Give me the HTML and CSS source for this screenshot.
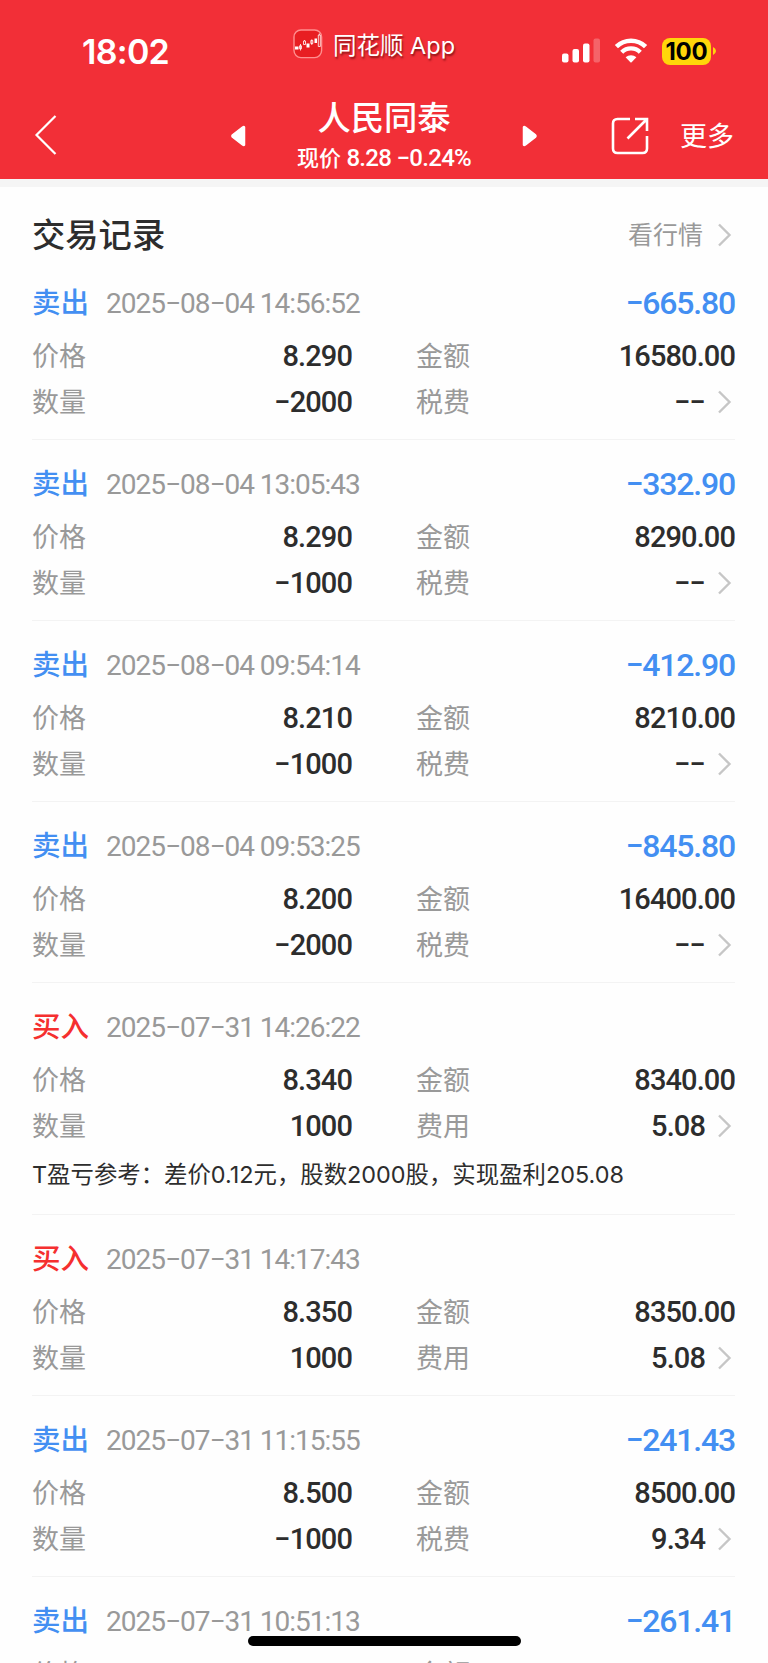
FILE: index.html
```html
<!DOCTYPE html>
<html lang="zh-CN">
<head>
  <meta charset="UTF-8" />
  <meta name="viewport" content="width=device-width, initial-scale=1.0"/>
  <title>人民同泰 交易记录</title>
  <link rel="stylesheet" href="styles.css">
</head>
<body>
  <!-- shared icons -->
  <svg class="sprite" width="0" height="0">
    <symbol id="arrow" viewBox="0 0 15 26">
      <path d="M2 2.5 L12.5 13 L2 23.5" fill="none" stroke="#c6c6c6" stroke-width="2.4"/>
    </symbol>
  </svg>

  <div class="page">
    <header class="header">
      <div class="status">
        <div class="time">18:02</div>
        <div class="app">
          <svg class="app-logo" width="30" height="30" viewBox="0 0 30 30">
            <rect x="1" y="1" width="27.6" height="27.6" rx="7" fill="#e81e22" stroke="#ff8f8f" stroke-width="1.4"/>
            <path d="M2 17.5h3.5v3H2z M13.5 14.5h3v4h-3z M21.5 9.5h2.5v4.5h-2.5z" fill="#fff"/>
            <path d="M6.5 16.8h2v3h-2z M7.5 15v6.5 M10.5 12h2v3.5h-2z M11.5 11v1 M17.8 11.5h2v3h-2z M18.8 10.3v5.7 M25.3 6h2v11.5h-2z M26.3 4.5v1.5" fill="none" stroke="#fff" stroke-width=".8"/>
          </svg>
          <span>同花顺 App</span>
        </div>
        <div class="status-icons">
          <svg width="39" height="26" viewBox="0 0 39 26">
            <rect x="0" y="15.5" width="6.5" height="9" rx="2" fill="#fff"/>
            <rect x="10.5" y="11" width="6.5" height="13.5" rx="2" fill="#fff"/>
            <rect x="21" y="5.5" width="6.5" height="19" rx="2" fill="#fff"/>
            <rect x="31.5" y="0.5" width="6.5" height="24" rx="2" fill="#fff" fill-opacity=".25"/>
          </svg>
          <svg class="wifi" width="34" height="26" viewBox="0 0 34 26">
            <path d="M2.4 8.6 A21 21 0 0 1 31.6 8.6" fill="none" stroke="#fff" stroke-width="4.6"/>
            <path d="M7.7 14.2 A13.3 13.3 0 0 1 26.3 14.2" fill="none" stroke="#fff" stroke-width="4.4"/>
            <path d="M11.6 19.3 A8 8 0 0 1 22.4 19.3 L17.6 24.2 Q17 24.7 16.4 24.2 Z" fill="#fff"/>
          </svg>
          <div class="battery">100</div>
          <svg class="battery-tip" width="3" height="8" viewBox="0 0 3 8">
            <path d="M0 0 Q3 1.5 3 4 Q3 6.5 0 8 Z" fill="#ffd60a"/>
          </svg>
        </div>
      </div>

      <nav class="nav">
        <svg class="back" width="24" height="42" viewBox="0 0 24 42">
          <path d="M22.5 2 L3.5 21 L22.5 40" fill="none" stroke="#fff" stroke-width="2.2"/>
        </svg>
        <div class="stock">
          <svg width="16" height="24" viewBox="0 0 16 24">
            <path d="M14.5 3 V21 Q14 22 12.5 21 L2.5 13.2 Q1.3 12 2.5 10.8 L12.5 3 Q14 2 14.5 3 Z" fill="#fff" stroke="#fff" stroke-width="1.5" stroke-linejoin="round"/>
          </svg>
          <div class="stock-info">
            <h1>人民同泰</h1>
            <p>现价 <span>8.28 −0.24%</span></p>
          </div>
          <svg width="16" height="24" viewBox="0 0 16 24">
            <path d="M1.5 3 V21 Q2 22 3.5 21 L13.5 13.2 Q14.7 12 13.5 10.8 L3.5 3 Q2 2 1.5 3 Z" fill="#fff" stroke="#fff" stroke-width="1.5" stroke-linejoin="round"/>
          </svg>
        </div>
        <div class="actions">
          <svg width="38" height="38" viewBox="0 0 38 38">
            <path d="M19 2 H6.5 Q2 2 2 6.5 V31.5 Q2 36 6.5 36 H31.5 Q36 36 36 31.5 V19" fill="none" stroke="#fff" stroke-width="2.6"/>
            <path d="M24 2 H36 V14 M36 2 L16.5 21.5" fill="none" stroke="#fff" stroke-width="2.6"/>
          </svg>
          <span>更多</span>
        </div>
      </nav>
    </header>

    <main class="content">
      <div class="title-bar">
        <h2>交易记录</h2>
        <a class="quote">看行情 <svg class="arrow"><use href="#arrow"/></svg></a>
      </div>

      <section class="record">
        <div class="record-head sell"><b>卖出</b><time>2025−08−04 14:56:52</time><strong>−665.80</strong></div>
        <dl class="record-body">
          <div><dt>价格</dt><dd>8.290</dd></div>
          <div><dt>金额</dt><dd>16580.00</dd></div>
          <div><dt>数量</dt><dd>−2000</dd></div>
          <div><dt>税费</dt><dd>−−</dd><svg class="arrow"><use href="#arrow"/></svg></div>
        </dl>
      </section>

      <section class="record">
        <div class="record-head sell"><b>卖出</b><time>2025−08−04 13:05:43</time><strong>−332.90</strong></div>
        <dl class="record-body">
          <div><dt>价格</dt><dd>8.290</dd></div>
          <div><dt>金额</dt><dd>8290.00</dd></div>
          <div><dt>数量</dt><dd>−1000</dd></div>
          <div><dt>税费</dt><dd>−−</dd><svg class="arrow"><use href="#arrow"/></svg></div>
        </dl>
      </section>

      <section class="record">
        <div class="record-head sell"><b>卖出</b><time>2025−08−04 09:54:14</time><strong>−412.90</strong></div>
        <dl class="record-body">
          <div><dt>价格</dt><dd>8.210</dd></div>
          <div><dt>金额</dt><dd>8210.00</dd></div>
          <div><dt>数量</dt><dd>−1000</dd></div>
          <div><dt>税费</dt><dd>−−</dd><svg class="arrow"><use href="#arrow"/></svg></div>
        </dl>
      </section>

      <section class="record">
        <div class="record-head sell"><b>卖出</b><time>2025−08−04 09:53:25</time><strong>−845.80</strong></div>
        <dl class="record-body">
          <div><dt>价格</dt><dd>8.200</dd></div>
          <div><dt>金额</dt><dd>16400.00</dd></div>
          <div><dt>数量</dt><dd>−2000</dd></div>
          <div><dt>税费</dt><dd>−−</dd><svg class="arrow"><use href="#arrow"/></svg></div>
        </dl>
      </section>

      <section class="record">
        <div class="record-head buy"><b>买入</b><time>2025−07−31 14:26:22</time></div>
        <dl class="record-body">
          <div><dt>价格</dt><dd>8.340</dd></div>
          <div><dt>金额</dt><dd>8340.00</dd></div>
          <div><dt>数量</dt><dd>1000</dd></div>
          <div><dt>费用</dt><dd>5.08</dd><svg class="arrow"><use href="#arrow"/></svg></div>
        </dl>
        <p class="note">T盈亏参考：差价0.12元，股数2000股，实现盈利205.08</p>
      </section>

      <section class="record">
        <div class="record-head buy"><b>买入</b><time>2025−07−31 14:17:43</time></div>
        <dl class="record-body">
          <div><dt>价格</dt><dd>8.350</dd></div>
          <div><dt>金额</dt><dd>8350.00</dd></div>
          <div><dt>数量</dt><dd>1000</dd></div>
          <div><dt>费用</dt><dd>5.08</dd><svg class="arrow"><use href="#arrow"/></svg></div>
        </dl>
      </section>

      <section class="record">
        <div class="record-head sell"><b>卖出</b><time>2025−07−31 11:15:55</time><strong>−241.43</strong></div>
        <dl class="record-body">
          <div><dt>价格</dt><dd>8.500</dd></div>
          <div><dt>金额</dt><dd>8500.00</dd></div>
          <div><dt>数量</dt><dd>−1000</dd></div>
          <div><dt>税费</dt><dd>9.34</dd><svg class="arrow"><use href="#arrow"/></svg></div>
        </dl>
      </section>

      <section class="record">
        <div class="record-head sell"><b>卖出</b><time>2025−07−31 10:51:13</time><strong>−261.41</strong></div>
        <dl class="record-body">
          <div><dt>价格</dt></div>
          <div><dt>金额</dt></div>
        </dl>
      </section>
    </main>

    <div class="home-bar"></div>
  </div>
</body>
</html>
```
FILE: styles.css
```css
* {
  margin: 0;
  padding: 0;
  box-sizing: border-box;
}

body {
  background-color: #fefefe;
  font-family: Roboto, "Noto Sans CJK SC", sans-serif;
  color: #2d2d2d;
}

.page {
  position: relative;
  width: 768px;
  height: 1663px;
  overflow: hidden;
}

.sprite {
  position: absolute;
}

svg {
  display: block;
  flex: none;
}

/* Header */
.header {
  height: 187px;
  background-color: #f22f37;
  border-bottom: 8px solid #f5f5f5;
  color: #fff;
}

.status {
  height: 92px;
  display: grid;
  grid-template-columns: 293px 268px 1fr;
}

.time {
  padding: 32px 0 0 82px;
  font-family: Inter, sans-serif;
  font-size: 34px;
  line-height: 40px;
  font-weight: 600;
  letter-spacing: -0.7px;
}

.app {
  display: flex;
  gap: 10px;
  padding-top: 29px;
  font-family: Inter, "Noto Sans CJK SC", sans-serif;
  font-size: 23.5px;
  line-height: 33px;
  white-space: nowrap;
  text-shadow: 1px 2px 2px rgba(70, 0, 0, 0.6);
}

.status-icons {
  display: flex;
  align-items: flex-start;
  padding: 38px 0 0 1px;
}

.wifi {
  margin-left: 13px;
}

.battery {
  width: 49px;
  height: 27px;
  margin-left: 14px;
  border-radius: 8px;
  background-color: #ffd60a;
  color: #000;
  font-family: Inter, sans-serif;
  font-size: 24px;
  line-height: 27px;
  font-weight: 700;
  letter-spacing: -0.2px;
  text-align: center;
}

.battery-tip {
  margin: 9px 0 0 2px;
}

.nav {
  height: 87px;
  display: flex;
}

.back {
  margin: 22px 0 0 33px;
}

.stock {
  width: 308px;
  margin-left: 173px;
  display: flex;
  justify-content: space-between;
}

.stock > svg {
  margin-top: 32px;
}

.stock-info {
  text-align: center;
  white-space: nowrap;
}

.stock-info h1 {
  padding-top: 6px;
  font-size: 33.3px;
  line-height: 42px;
  font-weight: 500;
}

.stock-info p {
  font-size: 22px;
  line-height: 37px;
  font-weight: 500;
}

.stock-info p span {
  font-size: 24px;
  letter-spacing: -0.7px;
}

.actions {
  display: flex;
  gap: 31px;
  margin-left: 73px;
  padding-top: 25px;
  font-size: 27px;
  line-height: 41px;
}

/* Records */
.content {
  padding: 1px 33px 0 32px;
}

.title-bar {
  height: 71px;
  display: flex;
  justify-content: space-between;
  padding-top: 24px;
  line-height: 48px;
}

.title-bar h2 {
  font-size: 33.3px;
  font-weight: 500;
}

.quote {
  display: flex;
  align-items: center;
  height: 48px;
  font-size: 25px;
  color: #999;
}

.arrow {
  width: 15px;
  height: 26px;
  margin: 0 3px 0 14px;
}

.quote .arrow {
  margin-bottom: 2px;
}

.record {
  padding: 19px 0 14px;
  border-bottom: 1px solid #f3f3f3;
}

.record-head {
  height: 55px;
  display: flex;
  line-height: 52px;
}

.record-head b {
  width: 74px;
  font-size: 28.5px;
  font-weight: 500;
}

.record-head time {
  font-size: 28px;
  letter-spacing: -1px;
  color: #999;
}

.record-head strong {
  margin-left: auto;
  font-size: 32px;
  line-height: 50px;
  font-weight: 500;
  letter-spacing: -1.2px;
}

.sell {
  color: #438ff2;
}

.buy {
  color: #f52f2f;
}

.record-head.buy time {
  color: #999;
}

.record-body {
  display: grid;
  grid-template-columns: 320px 319px;
  column-gap: 64px;
}

.record-body div {
  height: 46px;
  display: flex;
  align-items: center;
}

.record-body dt {
  margin-bottom: 4px;
  font-size: 27px;
  color: #999;
}

.record-body dd {
  margin-left: auto;
  font-size: 29px;
  font-weight: 500;
  letter-spacing: -0.9px;
}

.record-body .arrow {
  margin-left: 12px;
}

.note {
  padding: 2px 0 1px;
  font-family: Inter, "Noto Sans CJK SC", sans-serif;
  font-size: 23.4px;
  line-height: 48px;
  white-space: nowrap;
}

.home-bar {
  position: absolute;
  left: 248px;
  bottom: 17px;
  width: 273px;
  height: 10px;
  border-radius: 5px;
  background-color: #000;
}
```
